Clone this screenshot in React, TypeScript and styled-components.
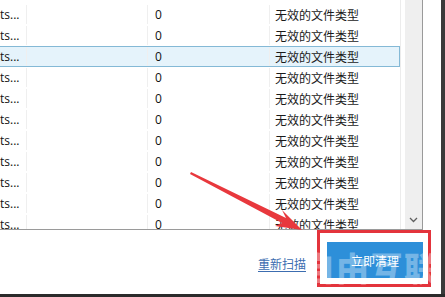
import React from "react";
import styled, { createGlobalStyle } from "styled-components";

const GlobalStyle = createGlobalStyle`
	html, body {
		margin: 0;
		padding: 0;
		background: #ffffff;
		overflow: hidden;
	}
	body {
		font-family: "Open Sans", "Noto Sans CJK SC", sans-serif;
	}
`;

const Screen = styled.div`
	position: relative;
	width: 445px;
	height: 297px;
	display: flex;
	flex-direction: column;
	overflow: hidden;
	background: #ffffff;
`;

const Main = styled.div`
	display: flex;
	height: 294px;
`;

const Panel = styled.div`
	width: 441px;
	display: flex;
	flex-direction: column;
`;

const RightEdge = styled.div`
	width: 4px;
	background: #3a3a3a;
`;

const BottomEdge = styled.div`
	height: 3px;
	background: #2b2b2b;
`;

const TableArea = styled.div`
	width: 422px;
	height: 229px;
	display: flex;
	border-right: 1px solid #9a9a9a;
	border-bottom: 1px solid #9a9a9a;
`;

const Rows = styled.div`
	width: 401px;
	padding-top: 4px;
	overflow: hidden;
`;

const Row = styled.div<{ $selected?: boolean }>`
	display: grid;
	grid-template-columns: 27px 121px 122px 131px;
	height: 21px;
	box-sizing: border-box;
	background: ${(p) => (p.$selected ? "#e5f3fb" : "transparent")};
	border: 1px solid ${(p) => (p.$selected ? "#84b9d6" : "transparent")};
	border-left: none;
`;

const Cell = styled.div<{ $last?: boolean }>`
	display: flex;
	align-items: center;
	font-size: 12px;
	color: #111;
	white-space: nowrap;
	overflow: hidden;
	border-right: 1px solid ${(p) => (p.$last ? "transparent" : "#efefef")};
`;

const NameCell = styled(Cell)`
	font-family: "Open Sans", sans-serif;
`;

const NumCell = styled(Cell)`
	padding-left: 7px;
	font-family: "Open Sans", sans-serif;
`;

const TypeCell = styled(Cell)`
	padding-left: 5px;
	font-family: "Noto Sans CJK SC", sans-serif;
	color: #1a1a1a;
`;

const Gap = styled.div`
	width: 4px;
	border-left: 1px solid #ececec;
`;

const ScrollBar = styled.div`
	width: 17px;
	background: #efefef;
	display: flex;
	flex-direction: column;
	justify-content: flex-end;
	align-items: center;
	padding-bottom: 6px;
	box-sizing: border-box;
`;

const Footer = styled.div`
	flex: 1;
	display: flex;
	align-items: flex-start;
	justify-content: flex-end;
	padding-right: 10px;
	gap: 11px;
`;

const RescanLink = styled.a`
	margin-top: 25px;
	font-family: "Noto Sans CJK SC", sans-serif;
	font-size: 12px;
	color: #3c6db0;
	text-decoration: underline;
	text-underline-offset: 2px;
`;

const Highlight = styled.div`
	width: 114px;
	height: 57px;
	box-sizing: border-box;
	border: 3px solid #e3343c;
	padding: 9px 5px 6px 7px;
`;

const CleanButton = styled.button`
	width: 96px;
	height: 36px;
	border: none;
	background: #2d8fd9;
	color: #ffffff;
	font-family: "Noto Sans CJK SC", sans-serif;
	font-size: 12px;
	padding: 0;
`;

const Watermark = styled.div`
	position: absolute;
	left: 302px;
	top: 243px;
	font-family: "Noto Sans CJK SC", sans-serif;
	font-weight: 900;
	font-size: 33px;
	letter-spacing: 1px;
	color: rgba(255, 255, 255, 0.35);
	pointer-events: none;
`;

const ArrowLayer = styled.svg`
	position: absolute;
	left: 0;
	top: 0;
	pointer-events: none;
`;

const rowCount = 11;
const SELECTED = 2;

export default function App() {
	return (
		<>
			<GlobalStyle />
			<Screen>
				<Main>
					<Panel>
						<TableArea>
							<Rows>
								{Array.from({ length: rowCount }).map((_, i) => (
									<Row key={i} $selected={i === SELECTED}>
										<NameCell>ts...</NameCell>
										<Cell />
										<NumCell>0</NumCell>
										<TypeCell $last>无效的文件类型</TypeCell>
									</Row>
								))}
							</Rows>
							<Gap />
							<ScrollBar>
								<svg width="9" height="6" viewBox="0 0 9 6">
									<path d="M1 1 L4.5 4.5 L8 1" fill="none" stroke="#606060" strokeWidth="1.3" />
								</svg>
							</ScrollBar>
						</TableArea>
						<Footer>
							<RescanLink>重新扫描</RescanLink>
							<Highlight>
								<CleanButton>立即清理</CleanButton>
							</Highlight>
						</Footer>
					</Panel>
					<RightEdge />
				</Main>
				<BottomEdge />
				<Watermark>自由互联</Watermark>
				<ArrowLayer width="445" height="297" viewBox="0 0 445 297">
					<path d="M191 172 L286 218 L282 210 L302 230 L275 226 L282 223 L190 174 Z" fill="#e8383d" />
				</ArrowLayer>
			</Screen>
		</>
	);
}
